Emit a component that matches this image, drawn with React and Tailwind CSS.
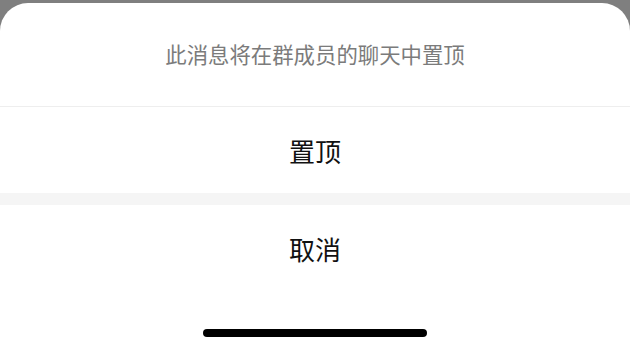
export default function App() {
  return (
    <div
      className="w-[630px] h-[351px] bg-[#7f7f7f] pt-[3px] overflow-hidden"
      style={{ fontFamily: '"Noto Sans CJK SC", "Noto Sans", sans-serif' }}
    >
      <div className="h-[348px] bg-white rounded-t-[28px] flex flex-col">
        <div className="h-[103px] flex items-center justify-center text-[21.4px] text-[#7b7b7b]">
          此消息将在群成员的聊天中置顶
        </div>
        <div className="h-px bg-[#eeeeee]" />
        <div className="h-[86px] flex items-center justify-center text-[26px] text-[#111111]">
          置顶
        </div>
        <div className="h-[12px] bg-[#f5f5f5]" />
        <div className="h-[86px] flex items-center justify-center text-[26px] text-[#111111]">
          取消
        </div>
        <div className="flex-1 flex justify-center pt-[38px]">
          <div className="w-[224px] h-[8px] rounded-full bg-black" />
        </div>
      </div>
    </div>
  );
}
